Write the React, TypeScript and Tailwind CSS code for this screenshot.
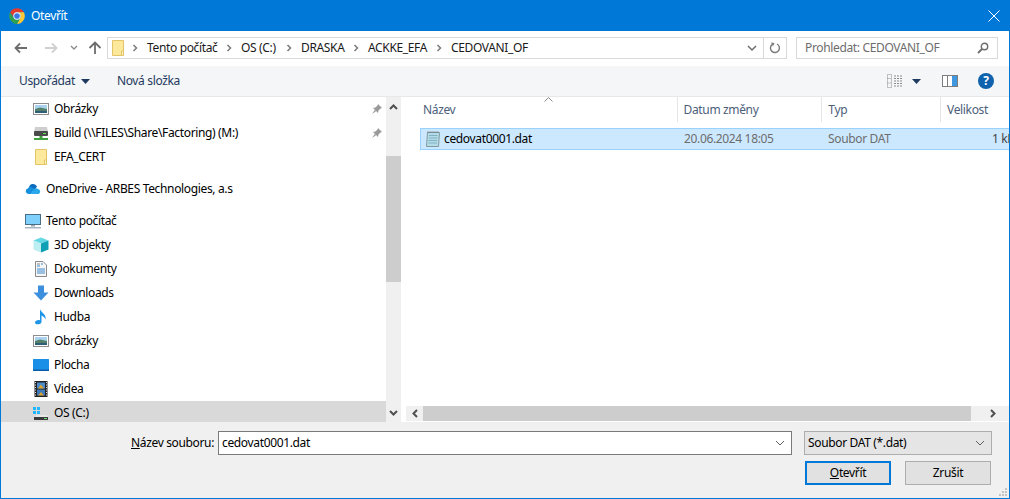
import React from 'react';

const Chevron = ({ className = '' }: { className?: string }) => (
  <svg width="8" height="8" viewBox="0 0 8 8" className={className}>
    <path d="M2.5 1 L5.5 4 L2.5 7" fill="none" stroke="#7a7a7a" strokeWidth="1.5" />
  </svg>
);

const Folder = ({ size = 16 }: { size?: number }) => (
  <svg width={size} height={size} viewBox="0 0 16 16">
    <path d="M2.5 0.5 H13.5 V15.5 H2.5 Z" fill="#fde99b" stroke="#e3c468" />
    <path d="M11.5 15.5 V11 H13.5 V15.5 Z" fill="#fff3c4" stroke="#e3c468" />
  </svg>
);

const ChromeLogo = () => (
  <svg width="16" height="16" viewBox="0 0 48 48">
    <path d="M3.2 13A24 24 0 0 1 44.8 13H24A11 11 0 0 0 14.47 29.5Z" fill="#e33b2e" />
    <path d="M44.8 13A24 24 0 0 1 24 48L33.53 29.5A11 11 0 0 0 24 13Z" fill="#fcc934" />
    <path d="M24 48A24 24 0 0 1 3.2 13L14.47 29.5A11 11 0 0 0 33.53 29.5Z" fill="#2fa04f" />
    <circle cx="24" cy="24" r="11" fill="#fff" />
    <circle cx="24" cy="24" r="8.5" fill="#3b78e7" />
  </svg>
);

const Pictures = () => (
  <svg width="16" height="16" viewBox="0 0 16 16">
    <rect x="0.5" y="2.5" width="15" height="11" fill="#fff" stroke="#8d8d8d" />
    <rect x="2" y="4" width="12" height="4" fill="#a9d3ee" />
    <path d="M2 8 L7 6.5 L14 8 V12 H2 Z" fill="#54806b" />
    <rect x="2" y="10" width="12" height="2" fill="#2f5f78" />
  </svg>
);

const NetDrive = () => (
  <svg width="16" height="16" viewBox="0 0 16 16">
    <path d="M2 2 H14 L15 7 H1 Z" fill="#cfcfcf" />
    <rect x="1" y="6" width="14" height="5" rx="1" fill="#4a4a4a" />
    <rect x="10" y="8" width="3" height="1" fill="#5fe05f" />
    <rect x="6.5" y="11" width="3" height="2" fill="#3ea13e" />
    <rect x="1" y="13" width="14" height="2" fill="#3ea13e" />
  </svg>
);

const Cloud = () => (
  <svg width="16" height="16" viewBox="0 0 16 16">
    <path d="M4 6.5 A4.2 4.2 0 0 1 12 5.5 L9 10 H2 Z" fill="#0f6cbd" />
    <path d="M3.5 13 A2.8 2.8 0 0 1 2.8 7.5 A3 3 0 0 1 7 6.5 L9.5 8 L6 13 Z" fill="#1490df" />
    <path d="M6 13 L9.5 7.5 A3.2 3.2 0 0 1 13 8 A2.6 2.6 0 0 1 13.5 13 Z" fill="#28a8ea" />
  </svg>
);

const Monitor = () => (
  <svg width="16" height="16" viewBox="0 0 16 16">
    <rect x="0.5" y="1.5" width="15" height="10" fill="#7fd0fa" stroke="#4a6d86" />
    <rect x="6" y="12" width="4" height="1.5" fill="#98a8b4" />
    <rect x="0" y="14" width="16" height="1.5" fill="#a9b6c0" />
  </svg>
);

const Cube = () => (
  <svg width="16" height="16" viewBox="0 0 16 16">
    <path d="M8 0.5 L15.5 3.5 L8 6.5 L0.5 3.5 Z" fill="#63d8e4" />
    <path d="M0.5 3.5 L8 6.5 V15.5 L0.5 12.5 Z" fill="#bdeef2" />
    <path d="M15.5 3.5 L8 6.5 V15.5 L15.5 12.5 Z" fill="#0f9fb4" />
  </svg>
);

const Doc = () => (
  <svg width="16" height="16" viewBox="0 0 16 16">
    <path d="M2.5 0.5 H10 L13.5 4 V15.5 H2.5 Z" fill="#f7f7f7" stroke="#8b8b8b" />
    <path d="M4 5 H7 M8 3 H10 M4 8 H12 M4 10 H12 M4 12 H12" stroke="#3d87c9" />
    <path d="M4 3 H7" stroke="#8b8b8b" />
  </svg>
);

const Download = () => (
  <svg width="16" height="16" viewBox="0 0 16 16">
    <path d="M5 0.5 H11 V7.5 H15.5 L8 15.5 L0.5 7.5 H5 Z" fill="#3b8fdc" />
  </svg>
);

const Note = () => (
  <svg width="16" height="16" viewBox="0 0 16 16">
    <path d="M7 0 C8 3.5 13.5 5 12.5 10.5 C12 8.5 10.5 7.5 8.5 6.5 V13 C8.5 15.5 2 16.5 2 13.5 C2 11.5 5 10.5 7 11.2 Z" fill="#1e96e8" />
  </svg>
);

const Desktop = () => (
  <svg width="16" height="16" viewBox="0 0 16 16">
    <rect x="0" y="2" width="16" height="12" rx="0.5" fill="#1a8fe8" />
    <rect x="0" y="12.5" width="16" height="1.5" fill="#0b5ea8" />
  </svg>
);

const Film = () => (
  <svg width="16" height="16" viewBox="0 0 16 16">
    <rect x="1.5" y="0" width="13" height="16" fill="#222" />
    <rect x="4" y="1.5" width="8" height="6" fill="#4d8ac9" />
    <rect x="4" y="8.5" width="8" height="6" fill="#3f78b8" />
    <path d="M5 7.5 L8 3.5 L11 7.5 Z M5 14.5 L8 11 L11 14.5 Z" fill="#d8a32e" />
    <path d="M2.5 1 V15 M13.5 1 V15" stroke="#ddd" strokeWidth="1" strokeDasharray="1 1.5" />
  </svg>
);

const SysDrive = () => (
  <svg width="16" height="16" viewBox="0 0 16 16">
    <path d="M0 2 H3 V5 H0 Z M4 2 H7 V5 H4 Z M0 6 H3 V9 H0 Z M4 6 H7 V9 H4 Z" fill="#22b8ff" />
    <path d="M3 10 H14 L15 12 H2 Z" fill="#e8e8e8" />
    <rect x="1" y="12" width="14" height="3" fill="#3a3a3a" />
    <rect x="11" y="13" width="3" height="1" fill="#6fe06f" />
  </svg>
);

const Pin = () => (
  <svg width="12" height="12" viewBox="0 0 12 12">
    <path d="M7 1 L11 5 L9.5 5.5 L7.5 7.5 L7 10 L2 5 L4.5 4.5 L6.5 2.5 Z M3.8 7 L1 11 L5 8.2 Z" fill="#9a9a9a" />
  </svg>
);

const TextFile = () => (
  <svg width="16" height="16" viewBox="0 0 16 16">
    <path d="M2.5 1.5 H14.5 L13.5 15.5 H1.5 Z" fill="#b4dbe6" stroke="#7f9aa2" />
    <path d="M4 4.5 H12.5 M4 7 H12.5 M3.5 9.5 H12 M3.5 12 H12" stroke="#7fb2c4" />
    <path d="M3 1.5 V0.5 M5 1.5 V0.5 M7 1.5 V0.5 M9 1.5 V0.5 M11 1.5 V0.5 M13 1.5 V0.5" stroke="#666" />
  </svg>
);

const NavRow = ({ icon, label, top, pin, active }: { icon: React.ReactNode; label: string; top?: boolean; pin?: boolean; active?: boolean }) => (
  <div className={`flex h-6 shrink-0 items-center ${top ? 'pl-6' : 'pl-8'} ${active ? 'bg-[#d9d9d9]' : ''}`}>
    <span className="w-[21px] shrink-0">{icon}</span>
    <span className="text-black">{label}</span>
    {pin && <span className="ml-auto mr-[3px]"><Pin /></span>}
  </div>
);

const crumbs = [
  { label: 'Tento počítač', width: 'w-[94px]' },
  { label: 'OS (C:)', width: 'w-[60px]' },
  { label: 'DRASKA', width: 'w-[67px]' },
  { label: 'ACKKE_EFA', width: 'w-[83px]' },
  { label: 'CEDOVANI_OF', width: 'w-[100px]' },
];

const columns = [
  { label: 'Název', width: 'w-[257px]', pad: 'pl-[2px]' },
  { label: 'Datum změny', width: 'w-[145px]', pad: 'pl-[6px]' },
  { label: 'Typ', width: 'w-[119px]', pad: 'pl-[6px]' },
  { label: 'Velikost', width: 'w-[68px]', pad: 'pl-[6px]' },
];

export default function App() {
  return (
    <div className="flex h-[499px] w-[1010px] flex-col overflow-hidden border-x border-b border-[#0078d7] bg-white font-['Noto_Sans',sans-serif] text-[12px] tracking-[-0.35px]">
      {/* title bar */}
      <div className="-mx-px flex h-[31px] shrink-0 items-center bg-[#0078d7] pl-[9px] pr-[10px] text-white">
        <ChromeLogo />
        <span className="ml-[6px]">Otevřít</span>
        <svg width="12" height="12" viewBox="0 0 12 12" className="ml-auto">
          <path d="M0.5 0.5 L11.5 11.5 M11.5 0.5 L0.5 11.5" stroke="#fff" strokeWidth="1" />
        </svg>
      </div>

      {/* address row */}
      <div className="flex h-[35px] shrink-0 items-center pb-px pl-[13px]">
        <svg width="14" height="12" viewBox="0 0 14 12">
          <path d="M13 6 H2 M6 1.5 L1.5 6 L6 10.5" fill="none" stroke="#6d6d6d" strokeWidth="1.8" />
        </svg>
        <svg width="14" height="12" viewBox="0 0 14 12" className="ml-[16px]">
          <path d="M1 6 H12 M8 1.5 L12.5 6 L8 10.5" fill="none" stroke="#d0d0d0" strokeWidth="1.8" />
        </svg>
        <svg width="8" height="6" viewBox="0 0 8 6" className="ml-[12px]">
          <path d="M1 1 L4 4 L7 1" fill="none" stroke="#8a8a8a" strokeWidth="1.4" />
        </svg>
        <svg width="14" height="14" viewBox="0 0 14 14" className="ml-[10px]">
          <path d="M7 13 V2 M1.5 7 L7 1.5 L12.5 7" fill="none" stroke="#6d6d6d" strokeWidth="1.8" />
        </svg>
        <div className="ml-[5px] flex h-[22px] w-[680px] items-center border border-[#d9d9d9] pl-[2px]">
          <Folder />
          <div className="ml-[5px] flex items-center">
            {crumbs.map(c => (
              <div key={c.label} className={`flex items-center ${c.width}`}>
                <Chevron className="mr-[8px] shrink-0" />
                <span className="whitespace-nowrap text-[#1a1a1a]">{c.label}</span>
              </div>
            ))}
          </div>
          <svg width="10" height="7" viewBox="0 0 10 7" className="ml-auto mr-[6px]">
            <path d="M1 1 L5 5 L9 1" fill="none" stroke="#6d6d6d" strokeWidth="1.5" />
          </svg>
          <div className="flex h-full w-[23px] items-center justify-center border-l border-[#d9d9d9]">
            <svg width="12" height="12" viewBox="0 0 12 12">
              <path d="M3 2.6 A4.5 4.5 0 1 0 8 2" fill="none" stroke="#7a7a7a" strokeWidth="1.4" />
              <path d="M2 0.5 L5.5 1 L4 4.5 Z" fill="#7a7a7a" />
            </svg>
          </div>
        </div>
        <div className="ml-[9px] flex h-[22px] w-[202px] items-center justify-between border border-[#d9d9d9] pl-[8px] pr-[8px] text-[#6d6d6d]">
          <span>Prohledat: CEDOVANI_OF</span>
          <svg width="12" height="12" viewBox="0 0 12 12">
            <circle cx="7.5" cy="4.5" r="3.2" fill="none" stroke="#6d6d6d" strokeWidth="1.4" />
            <path d="M5 7 L1 11" stroke="#6d6d6d" strokeWidth="1.8" />
          </svg>
        </div>
      </div>

      {/* command bar */}
      <div className="flex h-[31px] shrink-0 items-center border-b border-[#e8e8e8] bg-[#f5f6f7] pl-[18px] pr-[15px] text-[#1e3a5f]">
        <span>Uspořádat</span>
        <svg width="9" height="5" viewBox="0 0 9 5" className="ml-[6px]"><path d="M0 0 H9 L4.5 5 Z" fill="#1e3a5f" /></svg>
        <span className="ml-[27px]">Nová složka</span>
        <svg width="16" height="14" viewBox="0 0 16 14" className="ml-auto">
          <path d="M0.5 0.5 H4.5 V13.5 H0.5 Z M0.5 4.5 H4.5 M0.5 9 H4.5" fill="none" stroke="#8c8c8c" strokeDasharray="1 1" />
          <path d="M7 2 H16 M7 4.5 H16 M7 7 H16 M7 9.5 H16 M7 12 H16" stroke="#8c8c8c" strokeDasharray="2 1" />
        </svg>
        <svg width="9" height="5" viewBox="0 0 9 5" className="ml-[9px]"><path d="M0 0 H9 L4.5 5 Z" fill="#1e3a5f" /></svg>
        <svg width="16" height="12" viewBox="0 0 16 12" className="ml-[21px]">
          <rect x="0.5" y="0.5" width="15" height="11" fill="#fff" stroke="#7d7d7d" />
          <rect x="5" y="1" width="1" height="10" fill="#7d7d7d" />
          <rect x="10" y="1" width="5" height="10" fill="#3f97e0" />
        </svg>
        <div className="ml-[20px] flex h-4 w-4 items-center justify-center rounded-full bg-[#0f62ae] text-[12px] font-bold text-white">?</div>
      </div>

      {/* panes */}
      <div className="flex h-[325px] shrink-0">
        <div className="flex w-[385px] shrink-0 flex-col gap-2 overflow-hidden">
          <div className="flex flex-col">
            <NavRow icon={<Pictures />} label="Obrázky" pin />
            <NavRow icon={<NetDrive />} label="Build (\\FILES\Share\Factoring) (M:)" pin />
            <NavRow icon={<Folder />} label="EFA_CERT" />
          </div>
          <NavRow icon={<Cloud />} label="OneDrive - ARBES Technologies, a.s" top />
          <div className="flex flex-col">
            <NavRow icon={<Monitor />} label="Tento počítač" top />
            <NavRow icon={<Cube />} label="3D objekty" />
            <NavRow icon={<Doc />} label="Dokumenty" />
            <NavRow icon={<Download />} label="Downloads" />
            <NavRow icon={<Note />} label="Hudba" />
            <NavRow icon={<Pictures />} label="Obrázky" />
            <NavRow icon={<Desktop />} label="Plocha" />
            <NavRow icon={<Film />} label="Videa" />
            <NavRow icon={<SysDrive />} label="OS (C:)" active />
          </div>
        </div>

        {/* sidebar scrollbar */}
        <div className="flex w-[15px] shrink-0 flex-col items-center bg-[#f0f0f0]">
          <svg width="9" height="6" viewBox="0 0 9 6" className="mt-[7px]">
            <path d="M1 5 L4.5 1.5 L8 5" fill="none" stroke="#505050" strokeWidth="2" />
          </svg>
          <div className="mt-[46px] h-[126px] w-full bg-[#cdcdcd]" />
          <svg width="9" height="6" viewBox="0 0 9 6" className="mt-auto mb-[6px]">
            <path d="M1 1 L4.5 4.5 L8 1" fill="none" stroke="#505050" strokeWidth="2" />
          </svg>
        </div>

        {/* file list */}
        <div className="flex min-w-0 flex-1 flex-col pl-[5px] pb-px">
          <div className="relative flex h-[25px] shrink-0 pl-[15px] text-[#4c607a]">
            <svg width="9" height="5" viewBox="0 0 9 5" className="absolute left-[138px] top-0">
              <path d="M0.5 4.5 L4.5 0.5 L8.5 4.5" fill="none" stroke="#8a8a8a" />
            </svg>
            {columns.map(c => (
              <div key={c.label} className={`flex items-center border-r border-[#e5e5e5] last:border-r-0 ${c.width} ${c.pad}`}>
                {c.label}
              </div>
            ))}
          </div>
          <div className="mt-[6px] ml-[14px] flex h-[22px] shrink-0 items-center overflow-hidden whitespace-nowrap border-y border-l border-[#99d1ff] bg-[#cce8ff] text-[#6d6d6d]">
            <div className="flex w-[263px] shrink-0 items-center pl-[4px] text-black">
              <TextFile />
              <span className="ml-[3px]">cedovat0001.dat</span>
            </div>
            <div className="w-[144px] shrink-0">20.06.2024 18:05</div>
            <div className="w-[164px] shrink-0">Soubor DAT</div>
            <div className="shrink-0 text-[#444]">1 kB</div>
          </div>
          <div className="mt-auto flex h-[15px] shrink-0 items-center bg-[#cdcdcd]">
            <div className="flex h-full w-[17px] items-center justify-center bg-[#f0f0f0]">
              <svg width="6" height="9" viewBox="0 0 6 9"><path d="M5 1 L1.5 4.5 L5 8" fill="none" stroke="#505050" strokeWidth="2" /></svg>
            </div>
            <div className="ml-[548px] flex h-full flex-1 items-center justify-center bg-[#f0f0f0]">
              <svg width="6" height="9" viewBox="0 0 6 9" className="ml-[6px]"><path d="M1 1 L4.5 4.5 L1 8" fill="none" stroke="#505050" strokeWidth="2" /></svg>
            </div>
          </div>
        </div>
      </div>

      {/* footer */}
      <div className="relative flex flex-1 flex-col bg-[#f0f0f0] pt-[9px] text-black">
        <div className="flex h-6 items-center">
          <div className="w-[213px] shrink-0 text-right"><span className="underline">N</span>ázev souboru:</div>
          <div className="ml-[4px] flex h-6 w-[574px] items-center justify-between border border-[#7a7a7a] bg-white pl-[3px] pr-[6px]">
            <span>cedovat0001.dat</span>
            <svg width="10" height="6" viewBox="0 0 10 6"><path d="M1 1 L5 5 L9 1" fill="none" stroke="#606060" /></svg>
          </div>
          <div className="ml-[12px] flex h-6 w-[188px] items-center justify-between border border-[#adadad] bg-[#e5e5e5] pl-[3px] pr-[6px]">
            <span>Soubor DAT (*.dat)</span>
            <svg width="10" height="6" viewBox="0 0 10 6"><path d="M1 1 L5 5 L9 1" fill="none" stroke="#606060" /></svg>
          </div>
        </div>
        <div className="mt-[6px] flex pl-[804px]">
          <button className="h-6 w-[86px] border-2 border-[#0078d7] bg-[#e1e1e1]"><span className="underline">O</span>tevřít</button>
          <button className="ml-[14px] h-6 w-[86px] border border-[#adadad] bg-[#e1e1e1]">Zrušit</button>
        </div>
        <svg width="10" height="10" viewBox="0 0 10 10" className="absolute bottom-px right-px">
          <path d="M7 1 h2 v2 h-2 Z M4 4 h2 v2 h-2 Z M7 4 h2 v2 h-2 Z M1 7 h2 v2 h-2 Z M4 7 h2 v2 h-2 Z M7 7 h2 v2 h-2 Z" fill="#c4c4c4" />
        </svg>
      </div>
    </div>
  );
}
